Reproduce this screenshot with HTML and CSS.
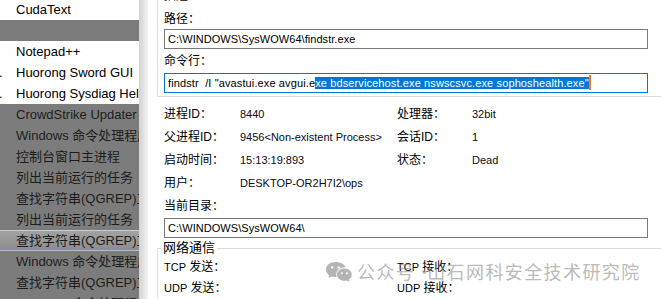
FILE: index.html
```html
<!DOCTYPE html>
<html lang="zh-CN">
  <head>
    <meta charset="UTF-8" />
    <title>进程属性</title>
    <link rel="stylesheet" href="styles.css">
  </head>
  <body>
    <!-- start menu -->
    <div class="menu">
      <div class="item lit first"><span class="lead"></span>CudaText</div>
      <div class="item"></div>
      <div class="item lit"><span class="lead"></span>Notepad++</div>
      <div class="item lit"><span class="lead">.</span>Huorong Sword GUI</div>
      <div class="item lit"><span class="lead">.</span>Huorong Sysdiag Helper</div>
      <div class="item"><span class="lead"></span>CrowdStrike Updater</div>
      <div class="item"><span class="lead"></span>Windows 命令处理程序</div>
      <div class="item"><span class="lead"></span>控制台窗口主进程</div>
      <div class="item"><span class="lead"></span>列出当前运行的任务</div>
      <div class="item"><span class="lead"></span>查找字符串(QGREP)工具</div>
      <div class="item"><span class="lead"></span>列出当前运行的任务</div>
      <div class="item picked"><span class="lead"></span>查找字符串(QGREP)工具</div>
      <div class="item"><span class="lead"></span>Windows 命令处理程序</div>
      <div class="item"><span class="lead"></span>查找字符串(QGREP)工具</div>
      <div class="item"><span class="lead"></span>Windows 命令处理程序</div>
    </div>
    <div class="shade"></div>
    <!-- end menu -->

    <!-- start dialog -->
    <div class="dialog">
      <div class="group-top">
        <p class="label cut">描述：</p>
        <p class="label path-label">路径：</p>
        <div class="field">C:\WINDOWS\SysWOW64\findstr.exe</div>
        <p class="label cmd-label">命令行：</p>
        <div class="field focus">findstr  /I "avastui.exe avgui.e<span class="sel">xe bdservicehost.exe nswscsvc.exe sophoshealth.exe"</span><span class="caret"></span></div>
      </div>

      <div class="info">
        <span class="key">进程ID：</span><span class="val">8440</span>
        <span class="key">处理器：</span><span class="val">32bit</span>
        <span class="key">父进程ID：</span><span class="val">9456&lt;Non-existent Process&gt;</span>
        <span class="key">会话ID：</span><span class="val">1</span>
        <span class="key">启动时间：</span><span class="val">15:13:19:893</span>
        <span class="key">状态：</span><span class="val">Dead</span>
        <span class="key">用户：</span><span class="val">DESKTOP-OR2H7I2\ops</span>
        <span></span><span></span>
        <span class="key">当前目录：</span>
      </div>
      <div class="field dir">C:\WINDOWS\SysWOW64\</div>

      <fieldset class="net">
        <legend>网络通信</legend>
        <div class="net-grid">
          <span class="key"><span class="abbr">TCP</span> 发送：</span><span class="key"><span class="abbr">TCP</span> 接收：</span>
          <span class="key"><span class="abbr">UDP</span> 发送：</span><span class="key"><span class="abbr">UDP</span> 接收：</span>
        </div>
      </fieldset>
    </div>
    <!-- end dialog -->

    <!-- watermark -->
    <div class="mark">
      <svg class="wx" width="27" height="21" viewBox="0 0 27 21">
        <path d="M10.5 1C5 1 1 4.4 1 8.6c0 2.4 1.3 4.4 3.4 5.8L3.6 17l3.1-1.6c1.2.3 2.4.5 3.8.5.4 0 .8 0 1.2-.1-.3-.8-.4-1.5-.4-2.3 0-4.1 3.8-7.3 8.6-7.3h.6C19.6 3.2 15.5 1 10.5 1z" fill="#b4b4b4"/>
        <circle cx="7.2" cy="6.4" r="1.2" fill="#fff"/>
        <circle cx="13.6" cy="6.4" r="1.2" fill="#fff"/>
        <path d="M19.4 7.6c-4.1 0-7.4 2.7-7.4 6.1s3.3 6.1 7.4 6.1c.9 0 1.8-.1 2.6-.4l2.5 1.3-.7-2.2c1.8-1.1 3-2.9 3-4.8 0-3.4-3.3-6.1-7.4-6.1z" fill="#b4b4b4"/>
        <circle cx="16.9" cy="12.2" r="1" fill="#fff"/>
        <circle cx="22" cy="12.2" r="1" fill="#fff"/>
      </svg>
      <span class="mark-text">公众号<span class="dot">·</span>山石网科安全技术研究院</span>
    </div>
  </body>
</html>
```

FILE: styles.css
```css
body {
  margin: 0;
  width: 661px;
  height: 299px;
  overflow: hidden;
  display: flex;
  position: relative;
  background: #ffffff;
  font-family: "Liberation Sans", "Noto Sans CJK SC", sans-serif;
  color: #000000;
}
.menu {
  width: 139px;
  flex: none;
  overflow: hidden;
  background: #7c7c7c;
  color: #1c1c1c;
  font-size: 13px;
}
.item {
  display: flex;
  height: 21px;
  line-height: 21px;
  white-space: nowrap;
}
.first {
  margin-top: -1px;
}
.lit {
  background: #ffffff;
  color: #000000;
}
.lead {
  width: 16px;
  flex: none;
  text-indent: -1px;
}
.picked {
  box-sizing: border-box;
  line-height: 19px;
  background: linear-gradient(#a2a2a2, #8d8d8d);
  border-top: 1px solid #c2ccd8;
  border-bottom: 1px solid #a6c0dc;
}
.shade {
  width: 9px;
  flex: none;
  background: linear-gradient(to right, #d2d2d2, #f3f3f3);
}
.dialog {
  flex: 1;
  min-width: 0;
  padding-left: 9px;
}
.group-top {
  margin-top: -12px;
  border-left: 1px solid #dcdcdc;
  border-bottom: 1px solid #dcdcdc;
  padding: 0 0 3px 6px;
}
.label {
  margin: 0;
  height: 16px;
  line-height: 16px;
  font-size: 12px;
}
.path-label {
  margin-top: 7px;
}
.cmd-label {
  margin-top: 4px;
}
.field {
  box-sizing: border-box;
  width: 484px;
  height: 20px;
  margin-top: 2px;
  padding: 0 3px;
  border: 1px solid #7a7a7a;
  background: #ffffff;
  font-size: 11px;
  line-height: 18px;
  letter-spacing: 0.05px;
  white-space: pre;
  overflow: hidden;
}
.cmd-label + .field {
  margin-top: 4px;
}
.focus {
  border-color: #0078d7;
  letter-spacing: 0.12px;
}
.sel {
  background: #0078d7;
  color: #ffffff;
}
.caret {
  display: inline-block;
  width: 2px;
  height: 15px;
  vertical-align: -3px;
  background: #f07d1e;
}
.info {
  display: grid;
  grid-template-columns: 76px 157px 75px auto;
  grid-auto-rows: 23px;
  align-items: center;
  margin-top: 5px;
  padding-left: 7px;
}
.key {
  font-size: 12px;
  line-height: 16px;
}
.abbr {
  font-size: 11px;
}
.val {
  font-size: 11px;
  line-height: 16px;
  color: #0a0a20;
}
.dir {
  margin: 1px 0 0 7px;
}
.net {
  margin: 2px 0 0;
  padding: 0 0 0 6px;
  border: none;
  border-top: 1px solid #dcdcdc;
  border-left: 1px solid #dcdcdc;
  min-width: 0;
}
.net legend {
  margin-left: -3px;
  padding: 0 2px;
  font-size: 13px;
  line-height: 16px;
}
.net-grid {
  display: grid;
  grid-template-columns: 233px auto;
  grid-auto-rows: 21px;
  align-items: center;
}
.mark {
  position: absolute;
  left: 325px;
  top: 259px;
  display: flex;
  align-items: center;
  gap: 5px;
}
.mark-text {
  font-family: "Noto Sans CJK SC", sans-serif;
  font-size: 18px;
  line-height: 24px;
  letter-spacing: 1.4px;
  color: rgba(140, 140, 140, 0.62);
  white-space: nowrap;
}
.dot {
  display: inline-block;
  width: 12px;
  text-align: center;
  letter-spacing: 0;
}
```
